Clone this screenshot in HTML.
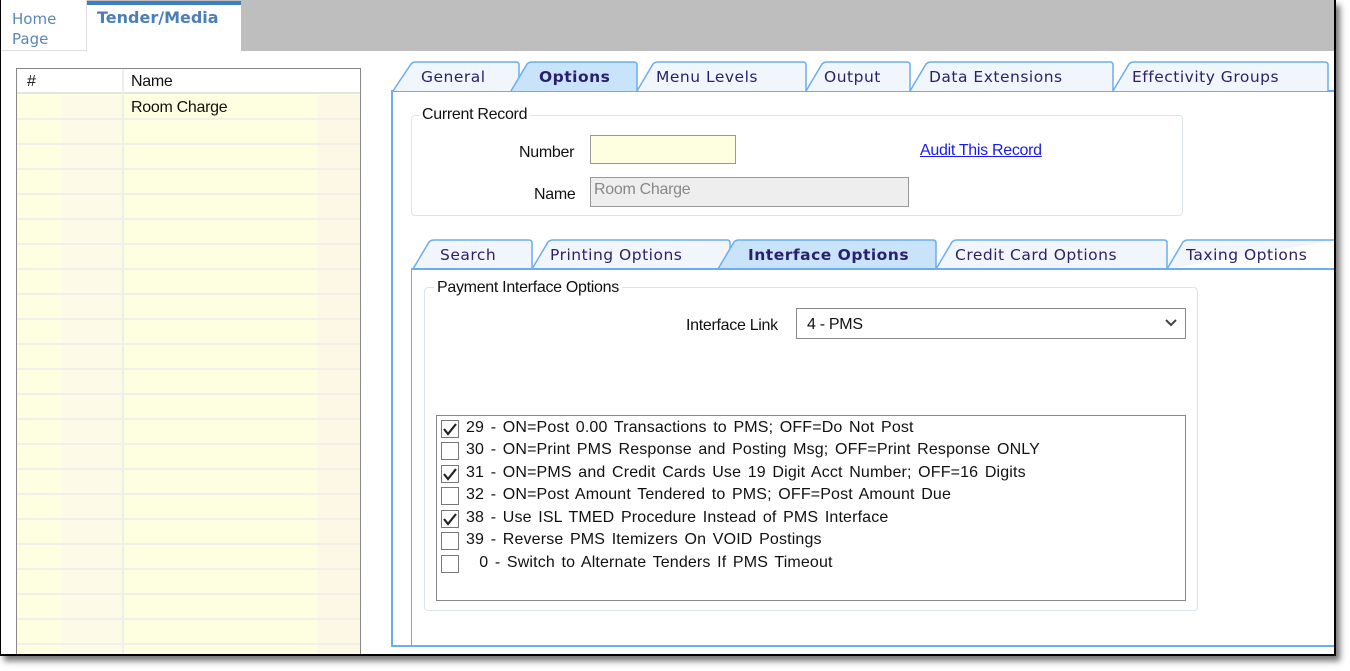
<!DOCTYPE html>
<html><head><meta charset="utf-8"><style>
*{margin:0;padding:0;box-sizing:border-box}
body{width:1350px;height:671px;background:#fff;position:relative;overflow:hidden;font-family:"Liberation Sans",Arial,sans-serif;color:#111}
.a{position:absolute}
.frame{left:0;top:0;width:1336px;height:656px;border:2px solid #000;border-left-width:1px;border-top:none;background:#fff;box-shadow:4px 5px 6px rgba(0,0,0,.55);overflow:hidden}
.lbl{font-size:16px;letter-spacing:-0.3px}
.tabt{font-family:"DejaVu Sans",Verdana,sans-serif;font-size:15.5px;fill:#2a1f6b;letter-spacing:0.5px}
.grid .r{position:absolute;left:0;width:343px;height:25px;border-bottom:2px solid #f0efe8;background:linear-gradient(90deg,#fefee0 0,#fefee0 45px,#fdfbe8 45px,#fdfbe8 105px,#fefee0 105px,#fefee0 300px,#fdf8e6 300px)}
.cb{position:absolute;left:440px;width:18px;height:18px;border:1px solid #777;background:#fff}
.it{position:absolute;left:465px;font-size:16px;letter-spacing:0.15px;word-spacing:2px}
</style></head><body>
<div class="a frame">
 <div class="a" style="left:0;top:0;width:1336px;height:51px;background:#bebebe"></div>
 <div class="a" style="left:0;top:0;width:86px;height:51px;background:#fff;border-right:1px solid #ddd;border-bottom:1px solid #ddd"></div>
 <div class="a" style="left:11px;top:9px;font-family:'DejaVu Sans',Verdana,sans-serif;font-size:15px;color:#5b87b5;line-height:20px">Home<br>Page</div>
 <div class="a" style="left:86px;top:1px;width:154px;height:51px;background:#fff;border-top:4px solid #3d7fc0"></div>
 <div class="a" style="left:96px;top:8px;font-family:'DejaVu Sans',Verdana,sans-serif;font-size:16px;font-weight:bold;color:#4a7fb8">Tender/Media</div>

 <div class="a grid" style="left:15px;top:68px;width:345px;height:600px;border:1px solid #888;border-bottom:none;background:#fefee0">
  <div class="a" style="left:0;top:0;width:343px;height:25px;background:#fff;border-bottom:2px solid #e4e4e4"></div>
  <div class="a lbl" style="left:10px;top:4px">#</div>
  <div class="a lbl" style="left:114px;top:4px">Name</div>
  <div class="r" style="top:26px"></div><div class="r" style="top:51px"></div><div class="r" style="top:76px"></div><div class="r" style="top:101px"></div><div class="r" style="top:126px"></div><div class="r" style="top:151px"></div><div class="r" style="top:176px"></div><div class="r" style="top:201px"></div><div class="r" style="top:226px"></div><div class="r" style="top:251px"></div><div class="r" style="top:276px"></div><div class="r" style="top:301px"></div><div class="r" style="top:326px"></div><div class="r" style="top:351px"></div><div class="r" style="top:376px"></div><div class="r" style="top:401px"></div><div class="r" style="top:426px"></div><div class="r" style="top:451px"></div><div class="r" style="top:476px"></div><div class="r" style="top:501px"></div><div class="r" style="top:526px"></div><div class="r" style="top:551px"></div><div class="r" style="top:576px"></div>
  <div class="a" style="left:105px;top:0;width:2px;height:600px;background:#efeee8"></div>
  <div class="a lbl" style="left:114px;top:30px">Room Charge</div>
 </div>

 <div class="a" style="left:390px;top:90px;width:960px;height:557px;border:2px solid #6aaef0;border-right:none"></div>
 <svg class="a" style="left:0;top:0" width="1336" height="280">
  <g stroke="#6aaef0" stroke-width="1.5" fill="#f1f6fc">
   <path d="M392 91 L410 64 Q412 62 415 62 L515 62 Q518 62 518 65 L518 91"/>
   <path d="M636 91 L652 64 Q654 62 657 62 L802 62 Q805 62 805 65 L805 91"/>
   <path d="M805 91 L821 64 Q823 62 826 62 L906 62 Q909 62 909 65 L909 91"/>
   <path d="M909 91 L925 64 Q927 62 930 62 L1109 62 Q1112 62 1112 65 L1112 91"/>
   <path d="M1112 91 L1128 64 Q1130 62 1133 62 L1324 62 Q1327 62 1327 65 L1327 91"/>
   <path d="M510 91 L526 64 Q528 62 531 62 L633 62 Q636 62 636 65 L636 91" fill="#c9e3fb"/>
   <path d="M412 269 L428 242 Q430 240 433 240 L528 240 Q531 240 531 243 L531 269"/>
   <path d="M531 269 L547 242 Q549 240 552 240 L726 240 Q729 240 729 243 L729 269"/>
   <path d="M935 269 L951 242 Q953 240 956 240 L1163 240 Q1166 240 1166 243 L1166 269"/>
   <path d="M1166 269 L1182 242 Q1184 240 1187 240 L1336 240"/>
   <path d="M717 269 L733 242 Q735 240 738 240 L932 240 Q935 240 935 243 L935 269" fill="#c9e3fb"/>
  </g>
  <text class="tabt" x="420" y="82">General</text>
  <text class="tabt" x="538" y="82" font-weight="bold" fill="#1c1c5e">Options</text>
  <text class="tabt" x="655" y="82">Menu Levels</text>
  <text class="tabt" x="823" y="82">Output</text>
  <text class="tabt" x="928" y="82">Data Extensions</text>
  <text class="tabt" x="1131" y="82">Effectivity Groups</text>
  <text class="tabt" x="439" y="260">Search</text>
  <text class="tabt" x="549" y="260">Printing Options</text>
  <text class="tabt" x="747" y="260" font-weight="bold" fill="#1c1c5e">Interface Options</text>
  <text class="tabt" x="954" y="260">Credit Card Options</text>
  <text class="tabt" x="1185" y="260">Taxing Options</text>
 </svg>

 <div class="a" style="left:410px;top:115px;width:772px;height:101px;border:1px solid #dde3ea;border-radius:4px"></div>
 <div class="a lbl" style="left:418px;top:106px;background:#fff;padding:0 3px">Current Record</div>
 <div class="a lbl" style="left:518px;top:144px">Number</div>
 <div class="a" style="left:589px;top:135px;width:146px;height:29px;border:1px solid #999;background:#fefee0"></div>
 <a class="a lbl" style="left:919px;top:142px;color:#1a1aee;text-decoration:underline">Audit This Record</a>
 <div class="a lbl" style="left:533px;top:186px">Name</div>
 <div class="a" style="left:589px;top:177px;width:319px;height:30px;border:1px solid #999;background:#eee"></div>
 <div class="a lbl" style="left:593px;top:181px;color:#888">Room Charge</div>

 <div class="a" style="left:410px;top:268px;width:940px;height:379px;border:2px solid #6aaef0;border-right:none;border-top:none;border-left-width:1px"></div>
 <div class="a" style="left:410px;top:268px;width:940px;height:2px;background:#6aaef0"></div>
 <div class="a" style="left:423px;top:287px;width:774px;height:324px;border:1px solid #dde3ea;border-radius:4px"></div>
 <div class="a lbl" style="left:433px;top:279px;background:#fff;padding:0 3px">Payment Interface Options</div>
 <div class="a lbl" style="left:685px;top:317px">Interface Link</div>
 <div class="a" style="left:795px;top:308px;width:390px;height:31px;border:1px solid #888;background:#fff"></div>
 <div class="a lbl" style="left:806px;top:316px">4 - PMS</div>
 <svg class="a" style="left:1163px;top:318px" width="14" height="10"><path d="M2 2 L7 7 L12 2" stroke="#444" stroke-width="2" fill="none"/></svg>

 <div class="a" style="left:435px;top:415px;width:750px;height:186px;border:1px solid #888;background:#fff"></div>
 <div class="cb" style="top:420px"></div><div class="cb" style="top:442px"></div><div class="cb" style="top:465px"></div><div class="cb" style="top:487px"></div><div class="cb" style="top:510px"></div><div class="cb" style="top:532px"></div><div class="cb" style="top:555px"></div>
 <svg class="a" style="left:440px;top:420px" width="18" height="120">
  <g stroke="#222" stroke-width="2.2" fill="none"><path d="M3 9 L7 14 L15 4"/><path d="M3 54 L7 59 L15 49"/><path d="M3 99 L7 104 L15 94"/></g>
 </svg>
 <div class="it" style="top:419px">29 - ON=Post 0.00 Transactions to PMS; OFF=Do Not Post</div>
 <div class="it" style="top:441px">30 - ON=Print PMS Response and Posting Msg; OFF=Print Response ONLY</div>
 <div class="it" style="top:464px">31 - ON=PMS and Credit Cards Use 19 Digit Acct Number; OFF=16 Digits</div>
 <div class="it" style="top:486px">32 - ON=Post Amount Tendered to PMS; OFF=Post Amount Due</div>
 <div class="it" style="top:509px">38 - Use ISL TMED Procedure Instead of PMS Interface</div>
 <div class="it" style="top:531px">39 - Reverse PMS Itemizers On VOID Postings</div>
 <div class="it" style="top:554px">&nbsp; 0 - Switch to Alternate Tenders If PMS Timeout</div>
</div>
</body></html>
